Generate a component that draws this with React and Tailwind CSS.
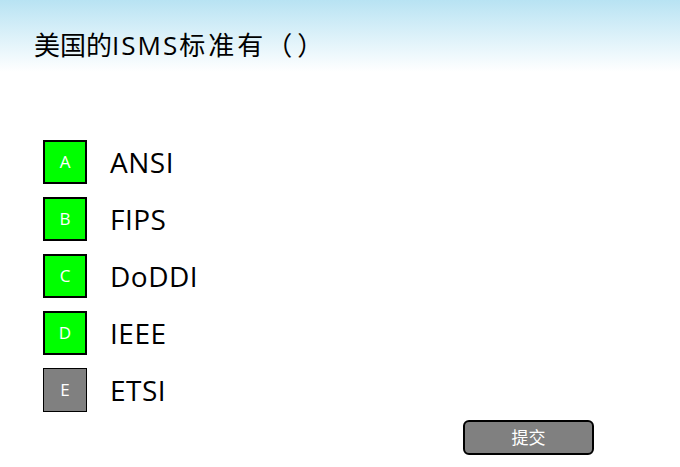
import React from 'react';

const options = [
    { key: 'A', text: 'ANSI', picked: true },
    { key: 'B', text: 'FIPS', picked: true },
    { key: 'C', text: 'DoDDI', picked: true },
    { key: 'D', text: 'IEEE', picked: true },
    { key: 'E', text: 'ETSI', picked: false },
];

const font = { fontFamily: '"Open Sans", "Noto Sans CJK SC", sans-serif' };

const App = () => {
    return (
        <div className="w-[680px] h-[467px] bg-white flex flex-col overflow-hidden" style={font}>
            {/* Header */}
            <div className="h-[72px] bg-gradient-to-b from-[#b8e3f3] to-white pl-[34px] pt-[32px]">
                <h1 className="text-[26px] leading-[26px] text-black font-normal whitespace-nowrap">
                    美国的<span className="tracking-[2px]">ISMS</span>
                    <span className="tracking-[3px]">标准有</span>
                    <span className="tracking-[5px]">（</span>）
                </h1>
            </div>

            {/* Options */}
            <div className="mt-[68px] pl-[43px] flex flex-col gap-[13px]">
                {options.map((o) => (
                    <div key={o.key} className="flex items-center h-[44px]">
                        <div
                            className={
                                o.picked
                                    ? 'w-[44px] h-[44px] bg-[#00ff00] border-2 border-black flex items-center justify-center text-white text-[17px]'
                                    : 'w-[44px] h-[44px] bg-[#808080] border border-black flex items-center justify-center text-white text-[17px]'
                            }
                        >
                            {o.key}
                        </div>
                        <span className="ml-[23px] text-[28px] leading-[44px] tracking-[0.5px] text-black">{o.text}</span>
                    </div>
                ))}
            </div>

            {/* Submit */}
            <div className="mt-[8px] flex justify-end pr-[86px]">
                <button className="w-[131px] h-[35px] rounded-[6px] border-2 border-black bg-[#808080] text-white text-[17px] flex items-center justify-center">
                    提交
                </button>
            </div>
        </div>
    );
};

export default App;
